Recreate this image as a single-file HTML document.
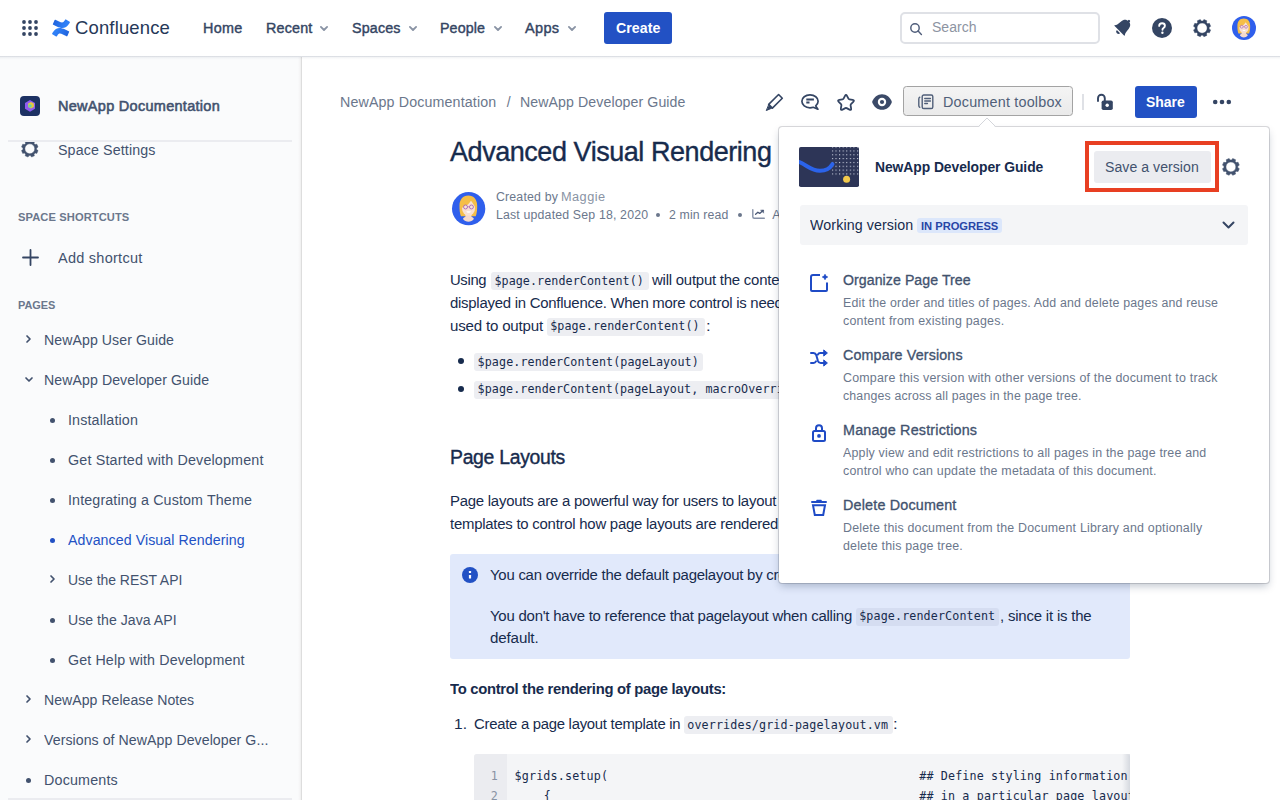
<!DOCTYPE html>
<html lang="en"><head>
<meta charset="utf-8">
<title>Advanced Visual Rendering - NewApp Documentation - Confluence</title>
<style>
*{box-sizing:border-box;margin:0;padding:0}
html,body{width:1280px;height:800px;overflow:hidden;background:#fff}
body{font-family:"Liberation Sans",sans-serif;color:#172B4D;font-size:14px;position:relative}
.a{position:absolute}
.t{position:absolute;white-space:nowrap;line-height:normal;margin-left:-.8px}
.md{-webkit-text-stroke:.35px currentColor}
.b{font-weight:bold}
.n{font-size:14px;color:#344563;-webkit-text-stroke:.4px #344563}
.s{font-size:14px;color:#42526E}
.sh{font-size:11px;font-weight:bold;color:#6B778C}
.p{font-size:15.5px;color:#172B4D}
.m{font-family:"DejaVu Sans Mono","Liberation Mono",monospace;font-size:11.7px;color:#172B4D}
.chip{position:absolute;background:#EDEEF2;border-radius:3px}
.dot{position:absolute;border-radius:50%;background:#42526E}
.pt{font-size:14px;color:#42526E;-webkit-text-stroke:.32px #42526E}
.pd{font-size:12px;color:#6B778C}
svg{position:absolute;overflow:visible}
</style>
</head>
<body>
<!-- ============ TOP NAV ============ -->
<div class="a" style="left:0;top:0;width:1280px;height:56px;background:#fff"></div>
<svg style="left:22px;top:20px" width="16" height="16" viewBox="0 0 16 16" fill="#344563"><circle cx="2" cy="2" r="1.9"></circle><circle cx="8" cy="2" r="1.9"></circle><circle cx="14" cy="2" r="1.9"></circle><circle cx="2" cy="8" r="1.9"></circle><circle cx="8" cy="8" r="1.9"></circle><circle cx="14" cy="8" r="1.9"></circle><circle cx="2" cy="14" r="1.9"></circle><circle cx="8" cy="14" r="1.9"></circle><circle cx="14" cy="14" r="1.9"></circle></svg>
<svg style="left:50px;top:16.8px" width="22" height="22" viewBox="0 0 32 32">
<defs><linearGradient id="cg1" x1="28" y1="29" x2="10" y2="19" gradientUnits="userSpaceOnUse"><stop offset="0" stop-color="#1D5DD8"></stop><stop offset="1" stop-color="#2F80F7"></stop></linearGradient><linearGradient id="cg2" x1="4" y1="3" x2="22" y2="13" gradientUnits="userSpaceOnUse"><stop offset="0" stop-color="#1D5DD8"></stop><stop offset="1" stop-color="#2F80F7"></stop></linearGradient></defs>
<path fill="url(#cg1)" transform="translate(0 .55)" d="M3.96 22.06c-.27.44-.57.95-.81 1.35a.83.83 0 0 0 .27 1.12l5.36 3.3a.83.83 0 0 0 1.14-.28c.21-.36.49-.83.79-1.33 2.12-3.5 4.26-3.07 8.11-1.23l5.32 2.53a.83.83 0 0 0 1.11-.42l2.55-5.77a.83.83 0 0 0-.41-1.08c-1.12-.53-3.35-1.58-5.36-2.55-7.22-3.5-13.36-3.28-18.07 4.36z"></path>
<path fill="url(#cg2)" transform="translate(0 -.55)" d="M28.04 9.96c.27-.44.57-.95.83-1.35a.83.83 0 0 0-.27-1.12l-5.36-3.3a.83.83 0 0 0-1.17.27c-.21.36-.49.83-.79 1.33-2.12 3.5-4.26 3.07-8.11 1.23L7.86 4.5a.83.83 0 0 0-1.11.41L4.2 10.68a.83.83 0 0 0 .41 1.08c1.12.53 3.35 1.58 5.36 2.55 7.24 3.49 13.38 3.26 18.07-4.35z"></path>
</svg>
<div class="t" style="left: 76px; font-size: 18.2px; color: rgb(37, 56, 88); top: 18px; letter-spacing: 0.149px; transform: scaleX(1.0159); transform-origin: 0px 50%;">Confluence</div>
<div class="t n" style="left: 203.4px; top: 19.5px; letter-spacing: 0.255px; transform: scaleX(1.0267); transform-origin: 0px 50%;">Home</div>
<div class="t n" style="left: 266.4px; top: 19.5px; letter-spacing: 0.178px; transform: scaleX(1.0234); transform-origin: 0px 50%;">Recent</div>
<div class="t n" style="left: 352.5px; top: 19.5px; letter-spacing: 0.166px; transform: scaleX(1.0209); transform-origin: 0px 50%;">Spaces</div>
<div class="t n" style="left: 441.2px; top: 19.5px; letter-spacing: 0.126px; transform: scaleX(1.0167); transform-origin: 0px 50%;">People</div>
<div class="t n" style="left: 526px; top: 19.5px; letter-spacing: 0.31px; transform: scaleX(1.0375); transform-origin: 0px 50%;">Apps</div>
<svg style="left:320px;top:26px" width="8" height="5" viewBox="0 0 8 5" fill="none" stroke="#8993A4" stroke-width="1.8" stroke-linecap="round" stroke-linejoin="round"><path d="M.9.9 4 4l3.100-3.100"></path></svg>
<svg style="left:409px;top:26px" width="8" height="5" viewBox="0 0 8 5" fill="none" stroke="#8993A4" stroke-width="1.8" stroke-linecap="round" stroke-linejoin="round"><path d="M.9.9 4 4l3.100-3.100"></path></svg>
<svg style="left:494px;top:26px" width="8" height="5" viewBox="0 0 8 5" fill="none" stroke="#8993A4" stroke-width="1.8" stroke-linecap="round" stroke-linejoin="round"><path d="M.9.9 4 4l3.100-3.100"></path></svg>
<svg style="left:568px;top:26px" width="8" height="5" viewBox="0 0 8 5" fill="none" stroke="#8993A4" stroke-width="1.8" stroke-linecap="round" stroke-linejoin="round"><path d="M.9.9 4 4l3.100-3.100"></path></svg>
<div class="a" style="left:604px;top:12px;width:68px;height:32px;background:#2251C4;border-radius:3px"></div>
<div class="t b" style="left: 616.5px; font-size: 14px; color: rgb(255, 255, 255); top: 19.5px; letter-spacing: 0.076px; transform: scaleX(1.0103); transform-origin: 0px 50%;">Create</div>
<div class="a" style="left:900px;top:12px;width:200px;height:32px;border:2px solid #DFE1E6;border-radius:5px;background:#fff"></div>
<svg style="left:909px;top:21.600px" width="15" height="15" viewBox="0 0 15 15" fill="none" stroke="#4F5D7A" stroke-width="1.450" stroke-linecap="round"><circle cx="6" cy="6" r="4.200"></circle><path d="M9.100 9.100 12.400 12.400"></path></svg>
<div class="t" style="left: 932.5px; font-size: 14px; color: rgb(141, 148, 162); top: 19px; letter-spacing: 0.012px; transform: scaleX(1.0014); transform-origin: 0px 50%;">Search</div>
<!-- bell -->
<svg style="left:1123px;top:27.200px" width="1" height="1" viewBox="0 0 1 1" fill="#344563"><g transform="rotate(45)"><path d="M-7 5.200H7c.3 0 .4-.3.200-.6C5.800 2.800 5.500 1.200 5.300-2.600 5.100-6 3-8 0-8s-5.100 2-5.300 5.400C-5.500 1.200-5.800 2.800-7.200 4.600c-.2.300-.1.600.2.600z"></path><circle cx="0" cy="-8.400" r="1.200"></circle><path d="M-2.300 6.400h4.600A2.300 2.300 0 0 1-2.300 6.400z"></path></g></svg>
<!-- help -->
<svg style="left:1152px;top:18px" width="20" height="20" viewBox="0 0 20 20"><circle cx="10" cy="10" r="10" fill="#344563"></circle><path d="M7.200 7.900c0-1.600 1.200-2.700 2.900-2.700 1.600 0 2.800 1 2.800 2.500 0 1.100-.6 1.700-1.400 2.300-.7.500-1 .8-1 1.500v.3" fill="none" stroke="#fff" stroke-width="1.900" stroke-linecap="round"></path><circle cx="10.400" cy="14.700" r="1.200" fill="#fff"></circle></svg>
<!-- gear -->
<svg style="left:1192.500px;top:18.500px" width="18.200" height="18.200" viewBox="0 0 20 20"><path fill="#344563" stroke="#344563" stroke-width=".5" stroke-linejoin="round" fill-rule="evenodd" d="M10.93 2.26 L11.98 0.61 L15.24 1.96 L14.82 3.86 L16.14 5.18 L18.04 4.76 L19.39 8.02 L17.74 9.07 L17.74 10.93 L19.39 11.98 L18.04 15.24 L16.14 14.82 L14.82 16.14 L15.24 18.04 L11.98 19.39 L10.93 17.74 L9.07 17.74 L8.02 19.39 L4.76 18.04 L5.18 16.14 L3.86 14.82 L1.96 15.24 L0.61 11.98 L2.26 10.93 L2.26 9.07 L0.61 8.02 L1.96 4.76 L3.86 5.18 L5.18 3.86 L4.76 1.96 L8.02 0.61 L9.07 2.26Z M4.40 10.00 a5.60 5.60 0 1 0 11.20 0 a5.60 5.60 0 1 0 -11.20 0Z"></path></svg>
<!-- avatar -->
<svg style="left:1232px;top:16px" width="24" height="24" viewBox="0 0 32 32"><defs><clipPath id="av1"><circle cx="16" cy="16" r="16"></circle></clipPath></defs><circle cx="16" cy="16" r="16" fill="#2F5FEC"></circle><g clip-path="url(#av1)"><path d="M15.700 3.300C10.400 3.300 7.300 7 7.200 13c-.1 4 .4 8 1.400 10.400h14.200c1-2.400 1.500-6.400 1.400-10.400C24.100 7 21 3.300 15.700 3.300z" fill="#F5BE48"></path><path d="M12.900 20.500h5.800v3.200c1.300.4 2.200 1.200 2.300 2.200-1.300 1.700-3.100 2.600-5.200 2.600s-3.900-.9-5.200-2.600c.1-1 1-1.800 2.300-2.200z" fill="#F6DACB"></path><ellipse cx="15.900" cy="15.400" rx="6.300" ry="7.300" fill="#F8E0D3"></ellipse><path d="M9.300 15.200C9.400 10 12 7.200 15.800 6.600c1.100-.2 2.100 0 2.900.4-1.300 3.700-4.600 6.900-9.400 8.200z" fill="#F5BE48"></path><path d="M18.500 6.900c2.400.8 3.700 3.100 3.900 6.800-1.900-1.500-3.300-3.900-3.900-6.800z" fill="#F5BE48"></path><circle cx="13" cy="14.400" r="1.900" fill="#F5E6D6" stroke="#A45BB8" stroke-width=".8"></circle><circle cx="18.700" cy="14.400" r="1.900" fill="#F5E6D6" stroke="#A45BB8" stroke-width=".8"></circle><path d="M14.900 14.200h1.900" stroke="#A45BB8" stroke-width=".6"></path><path d="M13.900 18.500h4.200c-.3 1-1.100 1.500-2.100 1.500s-1.800-.5-2.100-1.500z" fill="#fff"></path></g></svg>
<!-- ============ SIDEBAR ============ -->
<div class="a" style="left:0;top:57px;width:302px;height:743px;background:linear-gradient(90deg,#FAFBFC 0,#FAFBFC 298px,#F6F6F7 299.500px,#F1F1F1 300.500px,#DDDDDD 301px,#DDDDDD 302px)"></div>
<div class="a" style="left:0;top:56px;width:1280px;height:4px;background:linear-gradient(rgba(9,30,66,.14) 0,rgba(9,30,66,.14) 1px,rgba(9,30,66,.06) 1px,rgba(9,30,66,.03) 2px,rgba(9,30,66,.01) 3px,rgba(9,30,66,0) 4px)"></div>
<!-- space icon -->
<svg style="left:20px;top:96px" width="20" height="20" viewBox="0 0 20 20"><rect width="20" height="20" rx="4" fill="#1C3163"></rect><path d="M10 4.100l5 2.900v5.800L10 15.700l-5-2.900V7z" fill="#8F5BF0"></path><path d="M11 5.900l2.900 1.700v3.300L11 12.600l-2.900-1.700V7.600z" fill="#E3C742"></path><circle cx="10" cy="9.900" r="1.700" fill="#62D6A6"></circle></svg>
<div class="t" style="left: 58.5px; font-size: 14px; color: rgb(66, 82, 110); -webkit-text-stroke: 0.55px rgb(66, 82, 110); top: 97.6px; letter-spacing: 0.275px; transform: scaleX(1.0352); transform-origin: 0px 50%;">NewApp Documentation</div>
<div class="a" style="left:8px;top:140px;width:284px;height:2px;background:#EBECF0"></div>
<!-- space settings gear (clipped at divider) -->
<div class="a" style="left:18px;top:142px;width:24px;height:18px;overflow:hidden"><svg style="left:2.800px;top:-1.900px" width="17.600" height="17.600" viewBox="0 0 20 20"><path fill="#42526E" stroke="#42526E" stroke-width=".5" stroke-linejoin="round" fill-rule="evenodd" d="M10.93 2.26 L11.98 0.61 L15.24 1.96 L14.82 3.86 L16.14 5.18 L18.04 4.76 L19.39 8.02 L17.74 9.07 L17.74 10.93 L19.39 11.98 L18.04 15.24 L16.14 14.82 L14.82 16.14 L15.24 18.04 L11.98 19.39 L10.93 17.74 L9.07 17.74 L8.02 19.39 L4.76 18.04 L5.18 16.14 L3.86 14.82 L1.96 15.24 L0.61 11.98 L2.26 10.93 L2.26 9.07 L0.61 8.02 L1.96 4.76 L3.86 5.18 L5.18 3.86 L4.76 1.96 L8.02 0.61 L9.07 2.26Z M4.40 10.00 a5.60 5.60 0 1 0 11.20 0 a5.60 5.60 0 1 0 -11.20 0Z"></path></svg></div>
<div class="t s" style="left: 58.5px; top: 141.6px; letter-spacing: 0.119px; transform: scaleX(1.0173); transform-origin: 0px 50%;">Space Settings</div>
<div class="t sh" style="left: 18.6px; top: 211px; letter-spacing: 0.094px; transform: scaleX(1.0127); transform-origin: 0px 50%;">SPACE SHORTCUTS</div>
<svg style="left:21.5px;top:249px" width="17" height="17" viewBox="0 0 17 17" stroke="#344563" stroke-width="1.800" stroke-linecap="round"><path d="M8.500 1v15M1 8.500h15"></path></svg>
<div class="t s" style="left: 58.5px; top: 250px; letter-spacing: 0.245px; transform: scaleX(1.0362); transform-origin: 0px 50%;">Add shortcut</div>
<div class="t sh" style="left: 18.6px; top: 298.8px; letter-spacing: -0.03px; transform: scaleX(0.9961); transform-origin: 0px 50%;">PAGES</div>
<!-- tree -->
<svg style="left:26px;top:334.500px" width="5" height="8" viewBox="0 0 5 8" fill="none" stroke="#42526E" stroke-width="1.700" stroke-linecap="round" stroke-linejoin="round"><path d="M1 1l3 3-3 3"></path></svg>
<div class="t s" style="left: 44.4px; top: 332px; letter-spacing: 0.07px; transform: scaleX(1.0092); transform-origin: 0px 50%;">NewApp User Guide</div>
<svg style="left:24.500px;top:376.500px" width="8" height="5" viewBox="0 0 8 5" fill="none" stroke="#42526E" stroke-width="1.700" stroke-linecap="round" stroke-linejoin="round"><path d="M1 1l3 3 3-3"></path></svg>
<div class="t s" style="left: 44.4px; top: 372px; letter-spacing: 0.073px; transform: scaleX(1.0099); transform-origin: 0px 50%;">NewApp Developer Guide</div>
<div class="dot" style="left:50px;top:417.500px;width:5px;height:5px"></div>
<div class="t s" style="left: 68.4px; top: 412px; letter-spacing: 0.128px; transform: scaleX(1.0224); transform-origin: 0px 50%;">Installation</div>
<div class="dot" style="left:50px;top:457.500px;width:5px;height:5px"></div>
<div class="t s" style="left: 68.4px; top: 452px; letter-spacing: 0.158px; transform: scaleX(1.0231); transform-origin: 0px 50%;">Get Started with Development</div>
<div class="dot" style="left:50px;top:497.500px;width:5px;height:5px"></div>
<div class="t s" style="left: 68.4px; top: 492px; letter-spacing: 0.131px; transform: scaleX(1.0189); transform-origin: 0px 50%;">Integrating a Custom Theme</div>
<div class="dot" style="left:50px;top:537.500px;width:5px;height:5px;background:#2251C4"></div>
<div class="t s" style="left: 68.4px; color: rgb(34, 81, 196); top: 532px; letter-spacing: 0.081px; transform: scaleX(1.0117); transform-origin: 0px 50%;">Advanced Visual Rendering</div>
<svg style="left:50px;top:574.500px" width="5" height="8" viewBox="0 0 5 8" fill="none" stroke="#42526E" stroke-width="1.700" stroke-linecap="round" stroke-linejoin="round"><path d="M1 1l3 3-3 3"></path></svg>
<div class="t s" style="left: 68.4px; top: 572px; letter-spacing: -0.019px; transform: scaleX(0.9973); transform-origin: 0px 50%;">Use the REST API</div>
<div class="dot" style="left:50px;top:617.500px;width:5px;height:5px"></div>
<div class="t s" style="left: 68.4px; top: 612px; letter-spacing: 0.037px; transform: scaleX(1.0057); transform-origin: 0px 50%;">Use the Java API</div>
<div class="dot" style="left:50px;top:657.500px;width:5px;height:5px"></div>
<div class="t s" style="left: 68.4px; top: 652px; letter-spacing: 0.124px; transform: scaleX(1.0178); transform-origin: 0px 50%;">Get Help with Development</div>
<svg style="left:26px;top:694.500px" width="5" height="8" viewBox="0 0 5 8" fill="none" stroke="#42526E" stroke-width="1.700" stroke-linecap="round" stroke-linejoin="round"><path d="M1 1l3 3-3 3"></path></svg>
<div class="t s" style="left: 44.4px; top: 692px; letter-spacing: 0.039px; transform: scaleX(1.0052); transform-origin: 0px 50%;">NewApp Release Notes</div>
<svg style="left:26px;top:734.500px" width="5" height="8" viewBox="0 0 5 8" fill="none" stroke="#42526E" stroke-width="1.700" stroke-linecap="round" stroke-linejoin="round"><path d="M1 1l3 3-3 3"></path></svg>
<div class="t s" style="left: 44.4px; top: 732px; letter-spacing: 0.063px; transform: scaleX(1.0094); transform-origin: 0px 50%;">Versions of NewApp Developer G...</div>
<div class="dot" style="left:26px;top:777.500px;width:5px;height:5px"></div>
<div class="t s" style="left: 44.4px; top: 772px; letter-spacing: 0.172px; transform: scaleX(1.0213); transform-origin: 0px 50%;">Documents</div>
<div class="a" style="left:8px;top:798px;width:284px;height:2px;background:#EBECF0"></div>
<!-- ============ PAGE HEADER / TOOLBAR ============ -->
<div class="t" style="left: 341.1px; font-size: 14px; color: rgb(107, 119, 140); top: 94px; letter-spacing: 0.133px; transform: scaleX(1.0173); transform-origin: 0px 50%;">NewApp Documentation</div>
<div class="t" style="left: 507.6px; font-size: 14px; color: rgb(107, 119, 140); top: 94px;">/</div>
<div class="t" style="left: 521.1px; font-size: 14px; color: rgb(107, 119, 140); top: 94px; letter-spacing: 0.082px; transform: scaleX(1.0112); transform-origin: 0px 50%;">NewApp Developer Guide</div>
<!-- pencil -->
<svg style="left:765px;top:93px" width="19" height="19" viewBox="0 0 19 19" fill="none" stroke="#344563" stroke-width="1.600" stroke-linejoin="round" stroke-linecap="round"><path d="M13.600 1.500l3.700 3.700-9.900 9.900-3.700-3.700z"></path><path d="M3.900 12.100l3 3-5.300 2.300z" fill="#344563" stroke-width="1"></path></svg>
<!-- comment -->
<svg style="left:800px;top:93px" width="20" height="18" viewBox="0 0 20 18" fill="none" stroke="#344563" stroke-width="1.700" stroke-linejoin="round" stroke-linecap="round"><path d="M10 1.900c4.600 0 8.100 2.800 8.100 6.400 0 1.800-.9 3.400-2.400 4.600l2.200 3.300-4.600-1.900c-1 .3-2.100.5-3.300.5-4.600 0-8.100-2.900-8.100-6.500s3.500-6.400 8.100-6.400z"></path><path d="M6.300 6.500h7.600M6.300 9.500h3.200" stroke-width="1.900" stroke-linecap="butt"></path></svg>
<!-- star -->
<svg style="left:837px;top:93px" width="18" height="19" viewBox="0 0 18 19" fill="none" stroke="#344563" stroke-width="1.800" stroke-linejoin="round"><path d="M8.01 2.78 Q9.00 0.80 9.99 2.78L11.43 5.64 Q11.76 6.30 12.49 6.41L15.66 6.89 Q17.84 7.23 16.27 8.78L13.99 11.03 Q13.47 11.55 13.59 12.28L14.11 15.44 Q14.47 17.62 12.50 16.61L9.66 15.14 Q9.00 14.80 8.34 15.14L5.50 16.61 Q3.53 17.62 3.89 15.44L4.41 12.28 Q4.53 11.55 4.01 11.03L1.73 8.78 Q0.16 7.23 2.34 6.89L5.51 6.41 Q6.24 6.30 6.57 5.64Z"></path></svg>
<!-- eye -->
<svg style="left:872px;top:94px" width="20" height="16" viewBox="0 0 20 16"><path d="M10 .2C5.500.2 1.800 3 .1 8c1.700 5 5.400 7.800 9.900 7.800S18.200 13 19.900 8C18.200 3 14.500.2 10 .2z" fill="#3B4A68"></path><circle cx="10" cy="8" r="4.200" fill="#fff"></circle><circle cx="10" cy="8" r="2.100" fill="#3B4A68"></circle></svg>
<!-- document toolbox button -->
<div class="a" style="left:903px;top:86px;width:170px;height:30px;border:1px solid #A3A3A3;border-radius:3.500px;background:linear-gradient(#F4F4F4,#EAEAEA)"></div>
<svg style="left:918px;top:94px" width="16" height="16" viewBox="0 0 16 16" fill="none" stroke="#505F79" stroke-width="1.400" stroke-linejoin="round" stroke-linecap="round"><rect x="4.200" y="1" width="10.600" height="13.500" rx="1.600"></rect><path d="M1.800 3.200c-.7.300-1 1-1 1.800v6.500c0 .8.300 1.500 1 1.800"></path><path d="M6.800 4.500h5.600M6.800 7h5.600M6.800 9.500h2.600" stroke-width="1.500"></path></svg>
<div class="t" style="left: 943.5px; font-size: 14px; color: rgb(80, 95, 121); top: 93.5px; letter-spacing: 0.192px; transform: scaleX(1.0266); transform-origin: 0px 50%;">Document toolbox</div>
<div class="a" style="left:1081.500px;top:94px;width:2px;height:16px;background:#DFE1E6"></div>
<!-- unlock -->
<svg style="left:1096px;top:93px" width="18" height="18" viewBox="0 0 18 18"><path d="M2 8V5.200a3.400 3.400 0 0 1 6.800 0V8" fill="none" stroke="#344563" stroke-width="1.900" stroke-linecap="round"></path><rect x="5.600" y="7.400" width="11.200" height="9.600" rx="1.800" fill="#344563"></rect><circle cx="11.200" cy="12.200" r="1.700" fill="#fff"></circle></svg>
<div class="a" style="left:1135px;top:86px;width:62px;height:32px;border-radius:3px;background:#2251C4"></div>
<div class="t b" style="left: 1146.7px; font-size: 14px; color: rgb(255, 255, 255); top: 94.3px; letter-spacing: -0.012px; transform: scaleX(0.9985); transform-origin: 0px 50%;">Share</div>
<svg style="left:1212px;top:99px" width="20" height="6" viewBox="0 0 20 6" fill="#344563"><circle cx="3.200" cy="3" r="2.300"></circle><circle cx="10" cy="3" r="2.300"></circle><circle cx="16.800" cy="3" r="2.300"></circle></svg>

<!-- ============ CONTENT ============ -->
<div class="t" style="left: 450.5px; font-size: 28px; color: rgb(23, 43, 77); -webkit-text-stroke: 0.38px rgb(23, 43, 77); top: 135.8px; letter-spacing: -0.471px; transform: scaleX(0.9647); transform-origin: 0px 50%;">Advanced Visual Rendering</div>
<!-- author avatar -->
<svg style="left:452px;top:191.800px" width="33.300" height="33.300" viewBox="0 0 32 32"><defs><clipPath id="av2"><circle cx="16" cy="16" r="16"></circle></clipPath></defs><circle cx="16" cy="16" r="16" fill="#2F5FEC"></circle><g clip-path="url(#av2)"><path d="M15.700 3.300C10.400 3.300 7.300 7 7.200 13c-.1 4 .4 8 1.400 10.400h14.200c1-2.400 1.500-6.400 1.400-10.400C24.100 7 21 3.300 15.700 3.300z" fill="#F5BE48"></path><path d="M12.900 20.500h5.800v3.200c1.300.4 2.200 1.200 2.300 2.200-1.300 1.700-3.100 2.600-5.200 2.600s-3.900-.9-5.200-2.600c.1-1 1-1.800 2.300-2.200z" fill="#F6DACB"></path><ellipse cx="15.900" cy="15.400" rx="6.300" ry="7.300" fill="#F8E0D3"></ellipse><path d="M9.300 15.200C9.400 10 12 7.200 15.800 6.600c1.100-.2 2.100 0 2.900.4-1.300 3.700-4.600 6.900-9.400 8.200z" fill="#F5BE48"></path><path d="M18.500 6.900c2.400.8 3.700 3.100 3.900 6.800-1.900-1.500-3.300-3.900-3.900-6.800z" fill="#F5BE48"></path><circle cx="13" cy="14.400" r="1.900" fill="#F5E6D6" stroke="#A45BB8" stroke-width=".8"></circle><circle cx="18.700" cy="14.400" r="1.900" fill="#F5E6D6" stroke="#A45BB8" stroke-width=".8"></circle><path d="M14.900 14.200h1.900" stroke="#A45BB8" stroke-width=".6"></path><path d="M13.900 18.500h4.200c-.3 1-1.100 1.500-2.100 1.500s-1.800-.5-2.100-1.500z" fill="#fff"></path></g></svg>
<div class="t" style="left: 496.4px; font-size: 12px; color: rgb(107, 119, 140); top: 189.7px; letter-spacing: 0.165px; transform: scaleX(1.0272); transform-origin: 0px 50%;">Created by</div>
<div class="t" style="left: 561.5px; font-size: 12px; color: rgb(137, 147, 164); top: 189.7px; letter-spacing: 0.428px; transform: scaleX(1.0611); transform-origin: 0px 50%;">Maggie</div>
<div class="t" style="left: 496.4px; font-size: 12px; color: rgb(107, 119, 140); top: 207.7px; letter-spacing: 0.161px; transform: scaleX(1.0273); transform-origin: 0px 50%;">Last updated Sep 18, 2020</div>
<div class="dot" style="left:656.400px;top:213.300px;width:4px;height:4px;background:#6B778C"></div>
<div class="t" style="left: 670px; font-size: 12px; color: rgb(107, 119, 140); top: 207.7px; letter-spacing: 0.14px; transform: scaleX(1.0239); transform-origin: 0px 50%;">2 min read</div>
<div class="dot" style="left:738px;top:213.300px;width:4px;height:4px;background:#6B778C"></div>
<svg style="left:752px;top:209.300px" width="13" height="10" viewBox="0 0 13 10" fill="none" stroke-linecap="round" stroke-linejoin="round"><path d="M.8.700v7c0 .9.600 1.500 1.500 1.500h10" stroke="#8590A6" stroke-width="1.400"></path><path d="M3.600 5.200l2.300-2 1.800 1.200 3.300-2.900" stroke="#4A5876" stroke-width="1.300"></path><path d="M8.900 1.100h2.700v2.700z" fill="#4A5876" stroke="#4A5876" stroke-width=".5"></path></svg>
<div class="t" style="left: 773px; font-size: 12.5px; color: rgb(107, 119, 140); top: 207.7px;">Analytics</div>

<!-- paragraph 1 -->
<div class="t p" style="left: 450.5px; top: 271.3px; letter-spacing: -0.344px; transform: scaleX(0.9546); transform-origin: 0px 50%;">Using</div>
<div class="chip" style="left:491.300px;top:272px;width:157.500px;height:18px"></div>
<div class="t m" style="left: 495.2px; top: 273.8px; letter-spacing: 0.082px; transform: none;">$page.renderContent()</div>
<div class="t p" style="left: 653px; letter-spacing: -0.235px; transform: scaleX(0.9632); top: 271.3px; transform-origin: 0px 50%;">will output the content of the page as it would be</div>
<div class="t p" style="left: 450.5px; letter-spacing: -0.258px; transform: scaleX(0.9625); top: 293.8px; transform-origin: 0px 50%;">displayed in Confluence. When more control is needed, the following methods can be</div>
<div class="t p" style="left: 450.5px; top: 316.9px; letter-spacing: -0.187px; transform: scaleX(0.9724); transform-origin: 0px 50%;">used to output</div>
<div class="chip" style="left:547px;top:318px;width:158.200px;height:18px"></div>
<div class="t m" style="left: 551px; top: 319.4px; letter-spacing: 0.082px; transform: none;">$page.renderContent()</div>
<div class="t p" style="left: 706.5px; letter-spacing: 0.339px; transform: scaleX(1.0717); top: 316.9px; transform-origin: 0px 50%;">:</div>
<div class="dot" style="left:458px;top:358.200px;width:6px;height:6px;background:#172B4D"></div>
<div class="chip" style="left:474px;top:353px;width:229.300px;height:18px"></div>
<div class="t m" style="left: 478.4px; top: 354.5px; letter-spacing: 0.099px; transform: none;">$page.renderContent(pageLayout)</div>
<div class="dot" style="left:458px;top:386.400px;width:6px;height:6px;background:#172B4D"></div>
<div class="chip" style="left:474px;top:381px;width:400px;height:18px"></div>
<div class="t m" style="left: 478.4px; top: 382.3px; letter-spacing: 0.084px; transform: none;">$page.renderContent(pageLayout, macroOverrideLayout)</div>

<div class="t" style="left: 450.6px; font-size: 20px; color: rgb(23, 43, 77); -webkit-text-stroke: 0.4px rgb(23, 43, 77); top: 446.2px; letter-spacing: -0.305px; transform: scaleX(0.9692); transform-origin: 0px 50%;">Page Layouts</div>
<div class="t p" style="left: 450.7px; letter-spacing: -0.248px; transform: scaleX(0.9625); top: 491.5px; transform-origin: 0px 50%;">Page layouts are a powerful way for users to layout content. You can use Velocity</div>
<div class="t p" style="left: 450.7px; letter-spacing: -0.249px; transform: scaleX(0.9626); top: 514.7px; transform-origin: 0px 50%;">templates to control how page layouts are rendered in the exported output.</div>

<!-- info panel -->
<div class="a" style="left:450px;top:554.200px;width:680px;height:104.800px;background:#E1E9FB;border-radius:3px"></div>
<svg style="left:462px;top:567px" width="16" height="16" viewBox="0 0 16 16"><circle cx="8" cy="8" r="8" fill="#2251C4"></circle><rect x="6.900" y="4.100" width="2.200" height="2" rx=".5" fill="#fff"></rect><rect x="6.900" y="8" width="2.200" height="3.600" rx=".5" fill="#fff"></rect></svg>
<div class="t p" style="left: 490.6px; letter-spacing: -0.246px; transform: scaleX(0.9626); top: 565.7px; transform-origin: 0px 50%;">You can override the default pagelayout by creating your own template file.</div>
<div class="t p" style="left: 490.6px; top: 606.6px; letter-spacing: -0.236px; transform: scaleX(0.9647); transform-origin: 0px 50%;">You don't have to reference that pagelayout when calling</div>
<div class="chip" style="left:855.600px;top:608px;width:143px;height:17.500px;background:#D5DDF1"></div>
<div class="t m" style="left: 860px; top: 609.3px; letter-spacing: 0.121px; transform: none;">$page.renderContent</div>
<div class="t p" style="left: 1000.3px; top: 606.6px; letter-spacing: -0.198px; transform: scaleX(0.9647); transform-origin: 0px 50%;">, since it is the</div>
<div class="t p" style="left: 490.6px; top: 629.3px; letter-spacing: -0.147px; transform: scaleX(0.9764); transform-origin: 0px 50%;">default.</div>

<div class="t p b" style="left: 450.5px; top: 680px; letter-spacing: -0.306px; transform: scaleX(0.9564); transform-origin: 0px 50%;">To control the rendering of page layouts:</div>
<div class="t p" style="left: 454.6px; letter-spacing: 0.011px; transform: scaleX(1.0021); top: 715px; transform-origin: 0px 50%;">1.</div>
<div class="t p" style="left: 474.3px; top: 715px; letter-spacing: -0.277px; transform: scaleX(0.9588); transform-origin: 0px 50%;">Create a page layout template in</div>
<div class="chip" style="left:684px;top:716px;width:208.500px;height:18px"></div>
<div class="t m" style="left: 688px; top: 717.5px; letter-spacing: 0.142px; transform: none;">overrides/grid-pagelayout.vm</div>
<div class="t p" style="left: 893.5px; letter-spacing: 0.339px; transform: scaleX(1.0717); top: 715px; transform-origin: 0px 50%;">:</div>
<!-- code block -->
<div class="a" style="left:474px;top:754px;width:656px;height:46px;background:#F4F5F7;border-radius:3px 3px 0 0"></div>
<div class="a" style="left:474px;top:754px;width:33px;height:46px;background:#EBECF0;border-radius:3px 0 0 0"></div>
<div class="a" style="left:474px;top:754px;width:656px;height:46px;overflow:hidden">
<div class="t m" style="left: 17.5px; color: rgb(137, 147, 164); top: 15.3px;">1</div>
<div class="t m" style="left: 17.5px; color: rgb(137, 147, 164); top: 35.3px;">2</div>
<div class="t m" style="left: 41.4px; top: 14.8px; letter-spacing: 0.155px; transform: none;">$grids.setup(</div>
<div class="t m" style="left: 70.6px; top: 34.9px;">{</div>
<div class="t m" style="left: 446px; top: 14.8px; letter-spacing: 0.154px; transform: none;">## Define styling information of a</div>
<div class="t m" style="left: 446px; top: 34.9px; letter-spacing: 0.153px; transform: none;">## in a particular page layout</div>
<div class="a" style="left:648px;top:0;width:8px;height:46px;background:linear-gradient(90deg,rgba(9,30,66,0),rgba(9,30,66,.13))"></div>
</div>
<!-- ============ DOCUMENT TOOLBOX POPUP ============ -->
<div class="a" style="left:779px;top:126.800px;width:490px;height:456.200px;background:#fff;border-radius:3px;box-shadow:0 0 0 1px rgba(20,20,30,.13),0 0 1px rgba(9,30,66,.25),0 4px 8px -1px rgba(9,30,66,.26)"></div>
<svg style="left:978px;top:117.300px" width="18" height="11" viewBox="0 0 18 11"><path d="M.5 9.500 9 1l8.500 8.500z" fill="#fff" stroke="#D4D6DB" stroke-width="1"></path><rect x="1.300" y="9" width="15.400" height="2" fill="#fff"></rect></svg>
<!-- thumbnail -->
<svg style="left:799px;top:147px" width="60" height="40" viewBox="0 0 60 40"><defs><clipPath id="th"><rect width="60" height="40" rx="1.800"></rect></clipPath><pattern id="dots" x="32.900" y="-0.400" width="3.580" height="3.830" patternUnits="userSpaceOnUse"><rect x="0" y="0" width="1.100" height="1.100" fill="#C9CEDD"></rect></pattern></defs><g clip-path="url(#th)"><rect width="60" height="40" fill="#2D3557"></rect><rect x="32.500" y="0" width="27.500" height="28.500" fill="url(#dots)"></rect><path d="M-2 14.200C7 17 12 24 21 23.800c6-.1 10-2.600 12.400-6.600" fill="none" stroke="#2B63EA" stroke-width="4" stroke-linecap="round"></path><circle cx="47.600" cy="32.300" r="3.500" fill="#F2C94C"></circle></g></svg>
<div class="t b" style="left: 875.8px; font-size: 14px; color: rgb(23, 43, 77); top: 158.7px; letter-spacing: -0.067px; transform: scaleX(0.9913); transform-origin: 0px 50%;">NewApp Developer Guide</div>
<!-- highlighted save button -->
<div class="a" style="left:1094px;top:151px;width:117px;height:32px;background:#EBECF0;border-radius:3px"></div>
<div class="t" style="left: 1106px; font-size: 14px; color: rgb(66, 82, 110); top: 159px; letter-spacing: 0.043px; transform: scaleX(1.0062); transform-origin: 0px 50%;">Save a version</div>
<div class="a" style="left:1085.400px;top:140.700px;width:133.600px;height:51.100px;border:4px solid #E83F22"></div>
<svg style="left:1221.700px;top:157.600px" width="17.800" height="17.800" viewBox="0 0 20 20"><path fill="#42526E" stroke="#42526E" stroke-width=".6" stroke-linejoin="round" fill-rule="evenodd" d="M10.93 2.26 L11.98 0.61 L15.24 1.96 L14.82 3.86 L16.14 5.18 L18.04 4.76 L19.39 8.02 L17.74 9.07 L17.74 10.93 L19.39 11.98 L18.04 15.24 L16.14 14.82 L14.82 16.14 L15.24 18.04 L11.98 19.39 L10.93 17.74 L9.07 17.74 L8.02 19.39 L4.76 18.04 L5.18 16.14 L3.86 14.82 L1.96 15.24 L0.61 11.98 L2.26 10.93 L2.26 9.07 L0.61 8.02 L1.96 4.76 L3.86 5.18 L5.18 3.86 L4.76 1.96 L8.02 0.61 L9.07 2.26Z M4.40 10.00 a5.60 5.60 0 1 0 11.20 0 a5.60 5.60 0 1 0 -11.20 0Z"></path></svg>
<!-- working version bar -->
<div class="a" style="left:800px;top:205px;width:448px;height:39.700px;background:#F4F5F7;border-radius:3px"></div>
<div class="t" style="left: 810.4px; font-size: 14px; color: rgb(23, 43, 77); top: 216.8px; letter-spacing: 0.109px; transform: scaleX(1.0162); transform-origin: 0px 50%;">Working version</div>
<div class="a" style="left:917.200px;top:217.700px;width:85px;height:15px;background:#DCE7FB;border-radius:3px"></div>
<div class="t b" style="left: 921.7px; font-size: 11.2px; color: rgb(39, 69, 166); top: 219.9px; letter-spacing: -0.019px; transform: scaleX(0.9974); transform-origin: 0px 50%;">IN PROGRESS</div>
<svg style="left:1222px;top:221px" width="13" height="8" viewBox="0 0 13 8" fill="none" stroke="#344563" stroke-width="2" stroke-linecap="round" stroke-linejoin="round"><path d="M1.500 1.500l5 5 5-5"></path></svg>
<!-- menu items -->
<svg style="left:810px;top:273px" width="19" height="20" viewBox="0 0 19 20" fill="none" stroke="#1F4BC6" stroke-width="2" stroke-linejoin="round"><path d="M10 2H3a2 2 0 0 0-2 2v13a1 1 0 0 0 1 1h14a1 1 0 0 0 1-1V9.500" stroke-linecap="butt"></path><path d="M15 1.300l.9 1.800 1.800.9-1.800.9-.9 1.800-.9-1.800-1.800-.9 1.800-.9z" fill="#1F4BC6" stroke-width=".8"></path></svg>
<div class="t pt" style="left: 843.3px; top: 271.7px; letter-spacing: 0.067px; transform: scaleX(1.0094); transform-origin: 0px 50%;">Organize Page Tree</div>
<div class="t pd" style="left: 843.3px; top: 295.6px; letter-spacing: 0.173px; transform: scaleX(1.0314); transform-origin: 0px 50%;">Edit the order and titles of pages. Add and delete pages and reuse</div>
<div class="t pd" style="left: 843.3px; top: 313.5px; letter-spacing: 0.2px; transform: scaleX(1.036); transform-origin: 0px 50%;">content from existing pages.</div>

<svg style="left:810px;top:348px" width="19" height="20" viewBox="0 0 19 20" fill="none" stroke="#1F4BC6" stroke-width="2" stroke-linejoin="round" stroke-linecap="round"><path d="M1 5h2.500c1.500 0 2.300.8 2.800 2.200l1.600 5.600c.5 1.400 1.300 2.200 2.800 2.200H15"></path><path d="M1 15h2.500c1.200 0 2-.6 2.500-1.600M7.800 6.600C8.300 5.600 9.100 5 10.300 5H15"></path><path d="M14 2.200 17.400 5 14 7.800zM14 12.200l3.400 2.800-3.400 2.800z" fill="#1F4BC6" stroke-width="1"></path></svg>
<div class="t pt" style="left: 843.3px; top: 346.5px; letter-spacing: 0.142px; transform: scaleX(1.0193); transform-origin: 0px 50%;">Compare Versions</div>
<div class="t pd" style="left: 843.3px; top: 370.8px; letter-spacing: 0.199px; transform: scaleX(1.0358); transform-origin: 0px 50%;">Compare this version with other versions of the document to track</div>
<div class="t pd" style="left: 843.3px; top: 388.7px; letter-spacing: 0.157px; transform: scaleX(1.0285); transform-origin: 0px 50%;">changes across all pages in the page tree.</div>

<svg style="left:810px;top:423px" width="19" height="20" viewBox="0 0 19 20" fill="none" stroke="#1F4BC6" stroke-width="2" stroke-linejoin="round"><rect x="3" y="8" width="12" height="10" rx="1.500"></rect><path d="M6 8V5.200a3 3 0 0 1 6 0V8"></path><circle cx="9" cy="12.900" r="1.900" fill="#1F4BC6" stroke="none"></circle></svg>
<div class="t pt" style="left: 843.3px; top: 421.7px; letter-spacing: 0.173px; transform: scaleX(1.0252); transform-origin: 0px 50%;">Manage Restrictions</div>
<div class="t pd" style="left: 843.3px; top: 445.6px; letter-spacing: 0.181px; transform: scaleX(1.0339); transform-origin: 0px 50%;">Apply view and edit restrictions to all pages in the page tree and</div>
<div class="t pd" style="left: 843.3px; top: 463.9px; letter-spacing: 0.203px; transform: scaleX(1.0355); transform-origin: 0px 50%;">control who can update the metadata of this document.</div>

<svg style="left:810px;top:498px" width="19" height="20" viewBox="0 0 19 20" fill="none" stroke="#1F4BC6" stroke-width="2" stroke-linejoin="round" stroke-linecap="round"><path d="M2 4.100h14"></path><path d="M7 2.600h4" stroke-width="1.600"></path><path d="M3 7.200h12l-1.800 9.800H4.800z" stroke-linejoin="miter"></path></svg>
<div class="t pt" style="left: 843.3px; top: 496.8px; letter-spacing: 0.178px; transform: scaleX(1.024); transform-origin: 0px 50%;">Delete Document</div>
<div class="t pd" style="left: 843.3px; top: 520.8px; letter-spacing: 0.195px; transform: scaleX(1.0342); transform-origin: 0px 50%;">Delete this document from the Document Library and optionally</div>
<div class="t pd" style="left: 843.3px; top: 538.6px; letter-spacing: 0.18px; transform: scaleX(1.0341); transform-origin: 0px 50%;">delete this page tree.</div>


</body></html>
